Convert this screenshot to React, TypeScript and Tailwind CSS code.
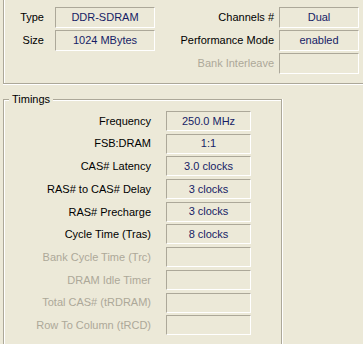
import React from "react";

const Box = ({ value, w }: { value?: string; w: string }) => (
  <div
    className={`${w} h-full flex items-center justify-center border-t border-l border-t-[#ACA899] border-l-[#ACA899] border-b border-r border-b-white border-r-white text-[#161c66] leading-none`}
  >
    {value}
  </div>
);

const timings: { label: string; value?: string; disabled?: boolean }[] = [
  { label: "Frequency", value: "250.0 MHz" },
  { label: "FSB:DRAM", value: "1:1" },
  { label: "CAS# Latency", value: "3.0 clocks" },
  { label: "RAS# to CAS# Delay", value: "3 clocks" },
  { label: "RAS# Precharge", value: "3 clocks" },
  { label: "Cycle Time (Tras)", value: "8 clocks" },
  { label: "Bank Cycle Time (Trc)", disabled: true },
  { label: "DRAM Idle Timer", disabled: true },
  { label: "Total CAS# (tRDRAM)", disabled: true },
  { label: "Row To Column (tRCD)", disabled: true },
];

export default function App() {
  return (
    <div className="w-[363px] h-[344px] bg-[#ECE9D8] overflow-hidden flex flex-col font-['Liberation_Sans',Arial,sans-serif] text-[11px] text-black">
      {/* top group */}
      <div className="ml-[3px] w-[400px] h-[84px] shrink-0 border-l border-b border-[#ACA899] shadow-[inset_1px_0_0_#fff,0_1px_0_#fff] pt-[7px] flex">
        <div className="flex flex-col gap-[2px]">
          <div className="flex items-center h-[21px]">
            <div className="w-[40px] text-right">Type</div>
            <div className="ml-[11px] h-full">
              <Box w="w-[100px]" value="DDR-SDRAM" />
            </div>
          </div>
          <div className="flex items-center h-[21px]">
            <div className="w-[40px] text-right">Size</div>
            <div className="ml-[11px] h-full">
              <Box w="w-[100px]" value="1024 MBytes" />
            </div>
          </div>
        </div>
        <div className="ml-[5px] flex flex-col gap-[2px]">
          <div className="flex items-center h-[21px]">
            <div className="w-[114px] text-right">Channels #</div>
            <div className="ml-[5px] h-full">
              <Box w="w-[80px]" value="Dual" />
            </div>
          </div>
          <div className="flex items-center h-[21px]">
            <div className="w-[114px] text-right whitespace-nowrap">Performance Mode</div>
            <div className="ml-[5px] h-full">
              <Box w="w-[80px]" value="enabled" />
            </div>
          </div>
          <div className="flex items-center h-[21px]">
            <div className="w-[114px] text-right text-[#ACA899]">Bank Interleave</div>
            <div className="ml-[5px] h-full">
              <Box w="w-[80px]" />
            </div>
          </div>
        </div>
      </div>

      {/* timings group */}
      <div className="relative mt-[15px] ml-[3px] w-[279px] h-[300px] shrink-0 border-t border-l border-r border-[#ACA899] shadow-[inset_1px_1px_0_#fff,1px_0_0_#fff] pt-[11px]">
        <div className="absolute left-[5px] top-[-7px] px-[3px] bg-[#ECE9D8] leading-[13px]">Timings</div>
        <div className="flex flex-col gap-[2.7px]">
          {timings.map((t) => (
            <div key={t.label} className="flex items-center h-[20px]">
              <div className={`w-[147px] text-right whitespace-nowrap ${t.disabled ? "text-[#ACA899]" : ""}`}>{t.label}</div>
              <div className="ml-[15px] h-full">
                <Box w="w-[85px]" value={t.value} />
              </div>
            </div>
          ))}
        </div>
      </div>
    </div>
  );
}
